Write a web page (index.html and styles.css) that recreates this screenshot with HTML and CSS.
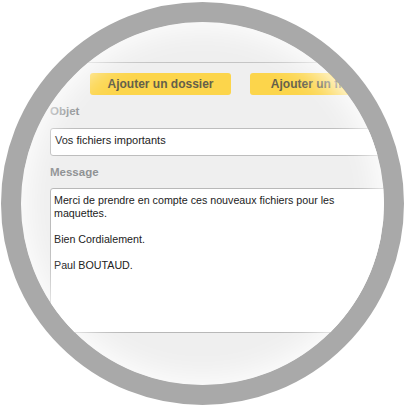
FILE: index.html
```html
<!DOCTYPE html>
<html lang="fr">
<head>
    <meta charset="UTF-8">
    <title>Envoyer des fichiers</title>
    <link rel="stylesheet" href="styles.css">
</head>
<body>
    <div class="lens">
        <div class="page">
            <div class="topbar"></div>
            <div class="actions">
                <button class="btn">Ajouter un dossier</button>
                <button class="btn">Ajouter un fichier</button>
            </div>
            <div class="field-label">Objet</div>
            <div class="field-input">Vos fichiers importants</div>
            <div class="field-label message-label">Message</div>
            <div class="field-text">Merci de prendre en compte ces nouveaux fichiers pour les
maquettes.

Bien Cordialement.

Paul BOUTAUD.</div>
        </div>
    </div>
</body>
</html>
```

FILE: styles.css
```css
body {
    margin: 0;
    padding: 2px 0 0 1px;
    background: #fff;
    font-family: "Liberation Sans", Arial, sans-serif;
}
.lens {
    position: relative;
    width: 363px;
    height: 363px;
    border: 20px solid #a9a9a9;
    border-radius: 50%;
    overflow: hidden;
    background: #efefef;
}
/* reflet blanc sur le bord interieur de la loupe */
.lens::after {
    content: "";
    position: absolute;
    top: 0;
    left: 0;
    right: 0;
    bottom: 0;
    border-radius: 50%;
    box-shadow: inset 0 0 30px 6px rgba(255, 255, 255, 0.9);
    pointer-events: none;
}
.page {
    width: 440px;
    padding-left: 29px;
}
.topbar {
    height: 40px;
    margin-left: -29px;
    border-bottom: 1px solid #c4c4c4;
}
.actions {
    display: flex;
    gap: 19px;
    margin-top: 10px;
    padding-left: 40px;
}
.btn {
    width: 141px;
    height: 22px;
    padding: 0;
    border: none;
    border-radius: 3px;
    background: #fcd54b;
    color: #64604a;
    font-family: "Liberation Sans", Arial, sans-serif;
    font-weight: bold;
    font-size: 12px;
    flex-shrink: 0;
}
.field-label {
    margin-top: 9px;
    color: #8f9294;
    font-weight: bold;
    font-size: 11.5px;
    line-height: 14px;
}
.field-input {
    box-sizing: border-box;
    height: 28px;
    margin-top: 10px;
    padding: 4px 4px;
    border: 1px solid #bdbdbd;
    border-radius: 3px;
    background: #fff;
    color: #222;
    font-size: 11px;
    line-height: 14px;
}
.message-label {
    margin-top: 9px;
}
.field-text {
    box-sizing: border-box;
    height: 145px;
    margin-top: 9px;
    padding: 5px 3px;
    border: 1px solid #b8b8b8;
    border-radius: 3px 0 0 0;
    background: #fff;
    color: #222;
    font-size: 10.7px;
    line-height: 13px;
    white-space: pre-line;
}
```
